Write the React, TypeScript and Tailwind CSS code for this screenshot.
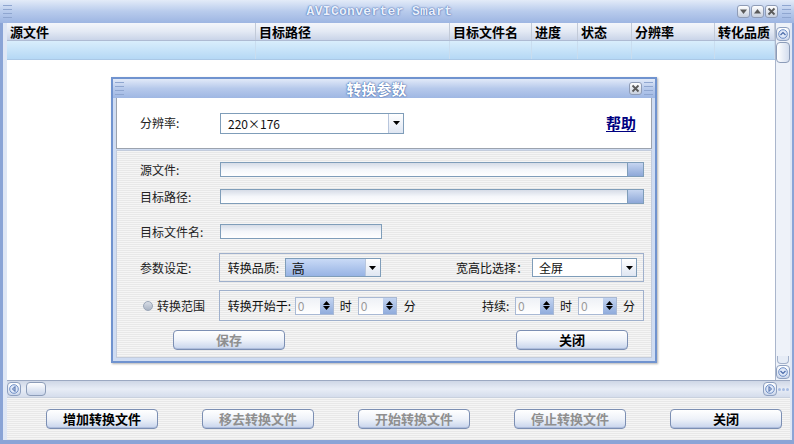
import React from 'react';

const cols = [
  { label: '源文件', w: 'w-[249px]' },
  { label: '目标路径', w: 'w-[194px]' },
  { label: '目标文件名', w: 'w-[82px]' },
  { label: '进度', w: 'w-[46px]' },
  { label: '状态', w: 'w-[54px]' },
  { label: '分辨率', w: 'w-[83px]' },
  { label: '转化品质', w: 'w-[60px]' },
];

const stripes =
  'bg-[image:repeating-linear-gradient(180deg,#f5f5f5_0px,#f5f5f5_1px,#e8e8e8_1px,#e8e8e8_2px)]';

const Grip: React.FC = () => (
  <div className="flex flex-col gap-[3px] w-[9px]">
    <div className="h-px bg-[#8fa6d0]" />
    <div className="h-px bg-[#8fa6d0]" />
    <div className="h-px bg-[#8fa6d0]" />
    <div className="h-px bg-[#8fa6d0]" />
  </div>
);

const TitleBtn: React.FC<{ kind: 'down' | 'up' | 'x' }> = ({ kind }) => (
  <div className="w-[13px] h-[13px] rounded-[3px] border border-[#8f9cb6] bg-linear-to-b from-white to-[#c8d0de] flex items-center justify-center">
    <svg width="9" height="9" viewBox="0 0 9 9">
      {kind === 'down' && <path d="M1 2.5h7L4.5 7z" fill="#5a5a5a" />}
      {kind === 'up' && <path d="M1 6.5h7L4.5 2z" fill="#5a5a5a" />}
      {kind === 'x' && <path d="M1.5 1.5l6 6M7.5 1.5l-6 6" stroke="#5a5a5a" strokeWidth="1.8" />}
    </svg>
  </div>
);

const Arrow: React.FC = () => (
  <div className="w-[15px] h-full border-l border-[#b8c6dd] bg-linear-to-b from-white to-[#dfe6f2] flex items-center justify-center">
    <svg width="7" height="4" viewBox="0 0 7 4">
      <path d="M0 0h7L3.5 4z" fill="#000" />
    </svg>
  </div>
);

const Spin: React.FC = () => (
  <div className="w-[39px] h-[18px] flex border border-[#a9b9d4] bg-white">
    <div className="flex-1 text-[12px] leading-[16px] pl-[2px] text-[#9a9a9a] bg-linear-to-b from-[#eef1f6] to-white">0</div>
    <div className="w-[13px] flex flex-col items-center justify-center gap-[1px] bg-linear-to-b from-[#c3d4f0] to-[#90acdc]">
      <svg width="7" height="4" viewBox="0 0 7 4"><path d="M0 4h7L3.5 0z" fill="#000" /></svg>
      <svg width="7" height="4" viewBox="0 0 7 4"><path d="M0 0h7L3.5 4z" fill="#000" /></svg>
    </div>
  </div>
);

const XpButton: React.FC<{ label: string; disabled?: boolean; className?: string }> = ({ label, disabled, className }) => (
  <div
    className={
      'w-[112px] rounded-[4px] border border-[#7c8fb3] bg-linear-to-b from-white via-[#eef2f9] to-[#c7d4ec] flex items-center justify-center text-[13px] font-bold shadow-[inset_0_-1px_0_#aebddc] ' +
      (disabled ? 'text-[#8f8f8f] ' : 'text-black ') +
      (className ?? '')
    }
  >
    {label}
  </div>
);

const FieldLabel: React.FC<{ text: string }> = ({ text }) => (
  <div className="w-[80px] text-[12px] text-[#222]">{text}</div>
);

const PathInput: React.FC = () => (
  <div className="w-[424px] h-[15px] flex border border-[#7f9db9] bg-linear-to-b from-[#d6dce7] via-[#f4f6fa] to-white">
    <div className="flex-1" />
    <div className="w-[16px] h-full bg-linear-to-b from-[#c6d5f0] to-[#8ea8d8] border-l border-[#7f9db9]" />
  </div>
);

const Dialog: React.FC = () => (
  <div className="absolute left-[111px] top-[77px] w-[546px] h-[286px] flex flex-col border-2 border-[#7093cf] bg-[#cfdcf2] shadow-[1px_1px_2px_rgba(0,0,0,0.3)]">
    <div className="h-[19px] flex items-center px-[2px] bg-linear-to-b from-[#e2eaf8] via-[#b6c9eb] to-[#9fb7e3]">
      <Grip />
      <div className="flex-1 text-center text-[15px] font-bold text-white [text-shadow:0_0_2px_#3f64a8,0_0_1px_#3f64a8] [font-family:'Noto_Sans_CJK_SC',sans-serif] leading-[18px]">
        转换参数
      </div>
      <TitleBtn kind="x" />
      <div className="w-[2px]" />
      <Grip />
    </div>
    <div className="flex-1 flex flex-col px-[3px] pb-[3px]">
      <div className="h-[51px] bg-white border border-[#9ca3ae] border-t-0 flex items-center pl-[23px] pr-[15px]">
        <FieldLabel text="分辨率:" />
        <div className="w-[184px] h-[21px] border border-[#7f9db9] flex bg-white">
          <div className="flex-1 text-[12px] leading-[19px] pl-[7px] text-[#111]">220×176</div>
          <Arrow />
        </div>
        <div className="flex-1" />
        <div className="text-[15px] font-bold text-[#000080] underline underline-offset-2">帮助</div>
      </div>
      <div className={'flex-1 mt-px border border-[#c3ccdc] flex flex-col pl-[102px] pr-[7px] pt-[11px] relative ' + stripes}>
        <div className="flex items-center h-[15px] -ml-[79px]">
          <FieldLabel text="源文件:" />
          <PathInput />
        </div>
        <div className="flex items-center h-[15px] mt-[12px] -ml-[79px]">
          <FieldLabel text="目标路径:" />
          <PathInput />
        </div>
        <div className="flex items-center h-[15px] mt-[20px] -ml-[79px]">
          <FieldLabel text="目标文件名:" />
          <div className="w-[162px] h-[15px] border border-[#7f9db9] bg-linear-to-b from-[#d6dce7] via-[#f4f6fa] to-white" />
        </div>
        <div className="flex items-center mt-[14px] -ml-[79px]">
          <div className="w-[79px] text-[12px] text-[#222]">参数设定:</div>
          <div className="w-[426px] h-[29px] border border-[#9fb0cc] flex items-center pl-[8px] pr-[6px] text-[12px] text-[#111]">
            <span className="w-[57px]">转换品质:</span>
            <div className="w-[96px] h-[19px] border border-[#7f9db9] flex bg-white">
              <div className="flex-1 bg-linear-to-b from-[#c9daf6] to-[#97b3e4] text-[13px] leading-[17px] pl-[6px]">高</div>
              <Arrow />
            </div>
            <div className="flex-1" />
            <span className="mr-[4px]">宽高比选择：</span>
            <div className="w-[105px] h-[19px] border border-[#7f9db9] flex bg-white">
              <div className="flex-1 text-[12px] leading-[17px] pl-[6px]">全屏</div>
              <Arrow />
            </div>
          </div>
        </div>
        <div className="flex items-center mt-[8px] -ml-[79px]">
          <div className="w-[79px] flex items-center gap-[4px] pl-[3px] text-[12px] text-[#222]">
            <div className="w-[10px] h-[10px] rounded-full border border-[#9aa6b8] bg-linear-to-b from-[#d8dde6] to-[#aab4c4]" />
            转换范围
          </div>
          <div className="w-[426px] h-[31px] border border-[#9fb0cc] flex items-center pl-[8px] pr-[8px] text-[12px] text-[#111]">
            <span className="w-[67px]">转换开始于:</span>
            <Spin />
            <span className="w-[24px] text-center">时</span>
            <Spin />
            <span className="ml-[7px]">分</span>
            <div className="flex-1" />
            <span className="w-[33px]">持续:</span>
            <Spin />
            <span className="w-[24px] text-center">时</span>
            <Spin />
            <span className="ml-[6px]">分</span>
          </div>
        </div>
        <div className="flex items-center h-[20px] mt-[9px] -ml-[46px] pr-[16px]">
          <XpButton label="保存" disabled className="h-[20px]" />
          <div className="flex-1" />
          <XpButton label="关闭" className="h-[20px]" />
        </div>
      </div>
    </div>
  </div>
);

const RoundBtn: React.FC<{ dir: 'up' | 'down' | 'left' | 'right' }> = ({ dir }) => (
  <div className="w-[14px] h-[14px] rounded-[4px] border border-[#8ea0c0] bg-linear-to-b from-white to-[#cdd8ec] flex items-center justify-center">
    <svg width="10" height="10" viewBox="0 0 10 10">
      <circle cx="5" cy="5" r="4.3" fill="#dfe8f8" stroke="#6f8fc6" strokeWidth="1" />
      {dir === 'up' && <path d="M2.5 6l2.5-2.5L7.5 6" fill="none" stroke="#4a6aa8" strokeWidth="1.2" />}
      {dir === 'down' && <path d="M2.5 4l2.5 2.5L7.5 4" fill="none" stroke="#4a6aa8" strokeWidth="1.2" />}
      {dir === 'left' && <path d="M6 2.5L3.5 5 6 7.5z" fill="#c4d2ec" stroke="#4a6aa8" strokeWidth="1" />}
      {dir === 'right' && <path d="M4 2.5L6.5 5 4 7.5z" fill="#c4d2ec" stroke="#4a6aa8" strokeWidth="1" />}
    </svg>
  </div>
);

export default function App() {
  return (
    <div className="relative w-[794px] h-[444px] overflow-hidden flex flex-col bg-[#8ea8d8] [font-family:'Noto_Sans_CJK_SC','Noto_Sans',sans-serif]">
      {/* title bar */}
      <div className="h-[23px] flex items-center px-[3px] bg-linear-to-b from-[#e3ebf8] via-[#b8cbec] to-[#9db5e2]">
        <Grip />
        <div className="flex-1 text-center text-[13px] font-bold tracking-[0.3px] text-[#e9f0fc] [text-shadow:0_0_2px_#4a6db0,0_0_1px_#4a6db0] [font-family:'Liberation_Mono',monospace] pl-[10px]">
          AVIConverter Smart
        </div>
        <div className="flex gap-[1px] mr-[4px]">
          <TitleBtn kind="down" />
          <TitleBtn kind="up" />
          <TitleBtn kind="x" />
        </div>
        <Grip />
      </div>

      {/* body */}
      <div className="flex-1 flex flex-col border-l-[3px] border-r-[2px] border-b-[4px] border-[#8aa4d6] bg-[#dfe7f5] pl-[4px] pr-[2px]">
        <div className="flex-1 flex bg-white">
          <div className="flex-1 flex flex-col">
            <div className="h-[18px] flex bg-linear-to-b from-[#f4f6fb] via-[#e3e9f4] to-[#c9d4e8] border-b border-[#aebbd3]">
              {cols.map((c) => (
                <div key={c.label} className={c.w + ' border-r border-[#c2cad8] pl-[3px] text-[13px] font-bold leading-[18px] text-black'}>
                  {c.label}
                </div>
              ))}
            </div>
            <div className="h-[19px] flex bg-linear-to-b from-[#d9eefc] to-[#b5d8f5] border-b border-[#aac8e6]">
              {cols.map((c) => (
                <div key={c.label} className={c.w + ' border-r border-[#c9ddef]'} />
              ))}
            </div>
          </div>
          {/* vertical scrollbar */}
          <div className="w-[15px] flex flex-col items-center pt-[4px] pb-[1px] bg-[#eef2f9] border-l border-[#aab6cc]">
            <RoundBtn dir="up" />
            <div className="w-[14px] h-[21px] mt-[1px] rounded-[4px] border border-[#8c9cb8] bg-linear-to-r from-white to-[#d3ddee]" />
            <div className="flex-1" />
            <div className="w-[12px] h-[8px] rounded-b-[4px] border border-t-0 border-[#a3b1ca] bg-[#e6ecf6] mb-[1px]" />
            <RoundBtn dir="down" />
          </div>
        </div>

        {/* horizontal scrollbar */}
        <div className="h-[17px] flex items-center bg-linear-to-b from-[#cfd7e6] via-[#e8edf6] to-[#d5ddec] border-t border-[#9ca9c2]">
          <RoundBtn dir="left" />
          <div className="w-[20px] h-[14px] ml-[5px] rounded-[4px] border border-[#8c9cb8] bg-linear-to-b from-white to-[#c9d5ea]" />
          <div className="flex-1" />
          <RoundBtn dir="right" />
          <div className="w-[13px] flex flex-wrap justify-end gap-[1px] pr-[1px]">
            <div className="w-[3px] h-[3px] rounded-full bg-[#a8bde3]" />
            <div className="w-[3px] h-[3px] rounded-full bg-[#a8bde3]" />
            <div className="w-[3px] h-[3px] rounded-full bg-[#a8bde3]" />
          </div>
        </div>

        {/* bottom buttons */}
        <div className={'h-[43px] flex items-center pl-[39px] gap-[44px] border-t border-[#c9d1de] ' + stripes}>
          <XpButton label="增加转换文件" className="h-[20px]" />
          <XpButton label="移去转换文件" disabled className="h-[20px]" />
          <XpButton label="开始转换文件" disabled className="h-[20px]" />
          <XpButton label="停止转换文件" disabled className="h-[20px]" />
          <XpButton label="关闭" className="h-[20px]" />
        </div>
      </div>

      <Dialog />
    </div>
  );
}
